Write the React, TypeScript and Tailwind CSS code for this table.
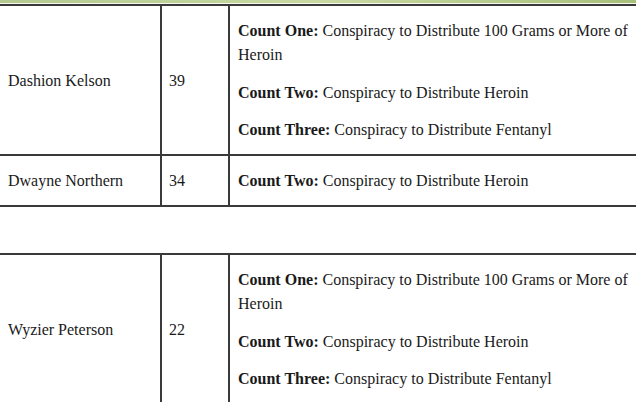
import React from "react";

type Count = { label: string; text: string };
type Row = { name: string; age: string; counts: Count[] };

function TableRow({ row }: { row: Row }) {
  return (
    <div className="flex border-b-2 border-[#3a3a3a]">
      <div className="w-[162px] shrink-0 border-r-2 border-[#3a3a3a] pl-2 pt-px flex items-center">
        {row.name}
      </div>
      <div className="w-[68px] shrink-0 border-r-2 border-[#3a3a3a] pl-[7px] pt-px flex items-center">
        {row.age}
      </div>
      <div className="flex-1 pl-2 pr-1 pt-[13px] pb-3 flex flex-col gap-[13.5px]">
        {row.counts.map((c, i) => (
          <p key={i}>
            <b className="font-bold">{c.label}</b>
            {" " + c.text}
          </p>
        ))}
      </div>
    </div>
  );
}

const threeCounts: Count[] = [
  { label: "Count One:", text: "Conspiracy to Distribute 100 Grams or More of Heroin" },
  { label: "Count Two:", text: "Conspiracy to Distribute Heroin" },
  { label: "Count Three:", text: "Conspiracy to Distribute Fentanyl" },
];

export default function App() {
  return (
    <div className="w-[636px] h-[402px] overflow-hidden bg-white text-[16px] leading-6 text-[#1a1a1a] font-['Liberation_Serif','Times_New_Roman',serif]">
      <div className="h-[3px] bg-gradient-to-r from-[#b3c98f] via-[#c9d9a3] to-[#a8c07c]" />
      <div className="h-px bg-[#f4f7ee]" />
      <div className="border-t-2 border-[#3a3a3a]">
        <TableRow row={{ name: "Dashion Kelson", age: "39", counts: threeCounts }} />
        <TableRow
          row={{
            name: "Dwayne Northern",
            age: "34",
            counts: [{ label: "Count Two:", text: "Conspiracy to Distribute Heroin" }],
          }}
        />
      </div>
      <div className="mt-[46px] border-t-2 border-[#3a3a3a]">
        <TableRow row={{ name: "Wyzier Peterson", age: "22", counts: threeCounts }} />
      </div>
    </div>
  );
}
